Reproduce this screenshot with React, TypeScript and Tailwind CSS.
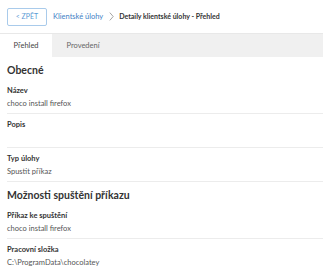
const fields = [
  { label: "Název", value: "choco install firefox" },
  { label: "Popis", value: "" },
  { label: "Typ úlohy", value: "Spustit příkaz" },
];

const commandFields = [
  { label: "Příkaz ke spuštění", value: "choco install firefox" },
  { label: "Pracovní složka", value: "C:\\ProgramData\\chocolatey" },
];

function Field({ label, value, last }: { label: string; value: string; last?: boolean }) {
  return (
    <div className={`h-[34px] pt-[5px] ${last ? "" : "border-b border-[#ececec]"}`}>
      <div className="text-[7.5px] font-bold text-[#333] leading-[12px]">{label}</div>
      <div className="text-[7.5px] text-[#555] leading-[12px] mt-[1px]">{value}</div>
    </div>
  );
}

export default function App() {
  return (
    <div className="w-[323px] h-[270px] bg-white overflow-hidden" style={{ fontFamily: 'Lato, "Open Sans", sans-serif' }}>
      {/* Header */}
      <div className="flex items-center h-[33px] pl-[7px]">
        <button className="h-[18px] w-[40px] border border-[#a9cbeb] rounded-[2px] text-[7px] text-[#5b9bd5] flex items-center justify-center">
          &lt; ZPĚT
        </button>
        <span className="ml-[6px] text-[7.5px] text-[#3f7fc6]">Klientské úlohy</span>
        <svg className="ml-[6px]" width="5" height="9" viewBox="0 0 5 9" fill="none">
          <path d="M0.8 0.6 L4.2 4.5 L0.8 8.4" stroke="#9a9a9a" strokeWidth="0.9" />
        </svg>
        <span className="ml-[5px] text-[7px] font-bold text-[#333]">Detaily klientské úlohy - Přehled</span>
      </div>

      {/* Tabs */}
      <div className="flex h-[24px] bg-[#f0f0f0] border-t border-[#e8e8e8]">
        <div className="w-[52px] bg-white flex items-center justify-center text-[7.5px] text-[#444]">Přehled</div>
        <div className="w-[62px] flex items-center justify-center text-[7.5px] text-[#666]">Provedení</div>
      </div>

      <div className="pl-[7px]">
        <div className="h-[23px] pt-[5px] text-[10.5px] leading-[16px] font-bold text-[#333]">Obecné</div>
        {fields.map((f) => (
          <Field key={f.label} {...f} />
        ))}
        <div className="h-[23px] pt-[5px] text-[10.5px] leading-[16px] font-bold text-[#333]">Možnosti spuštění příkazu</div>
        {commandFields.map((f, i) => (
          <Field key={f.label} {...f} last={i === commandFields.length - 1} />
        ))}
      </div>
    </div>
  );
}
